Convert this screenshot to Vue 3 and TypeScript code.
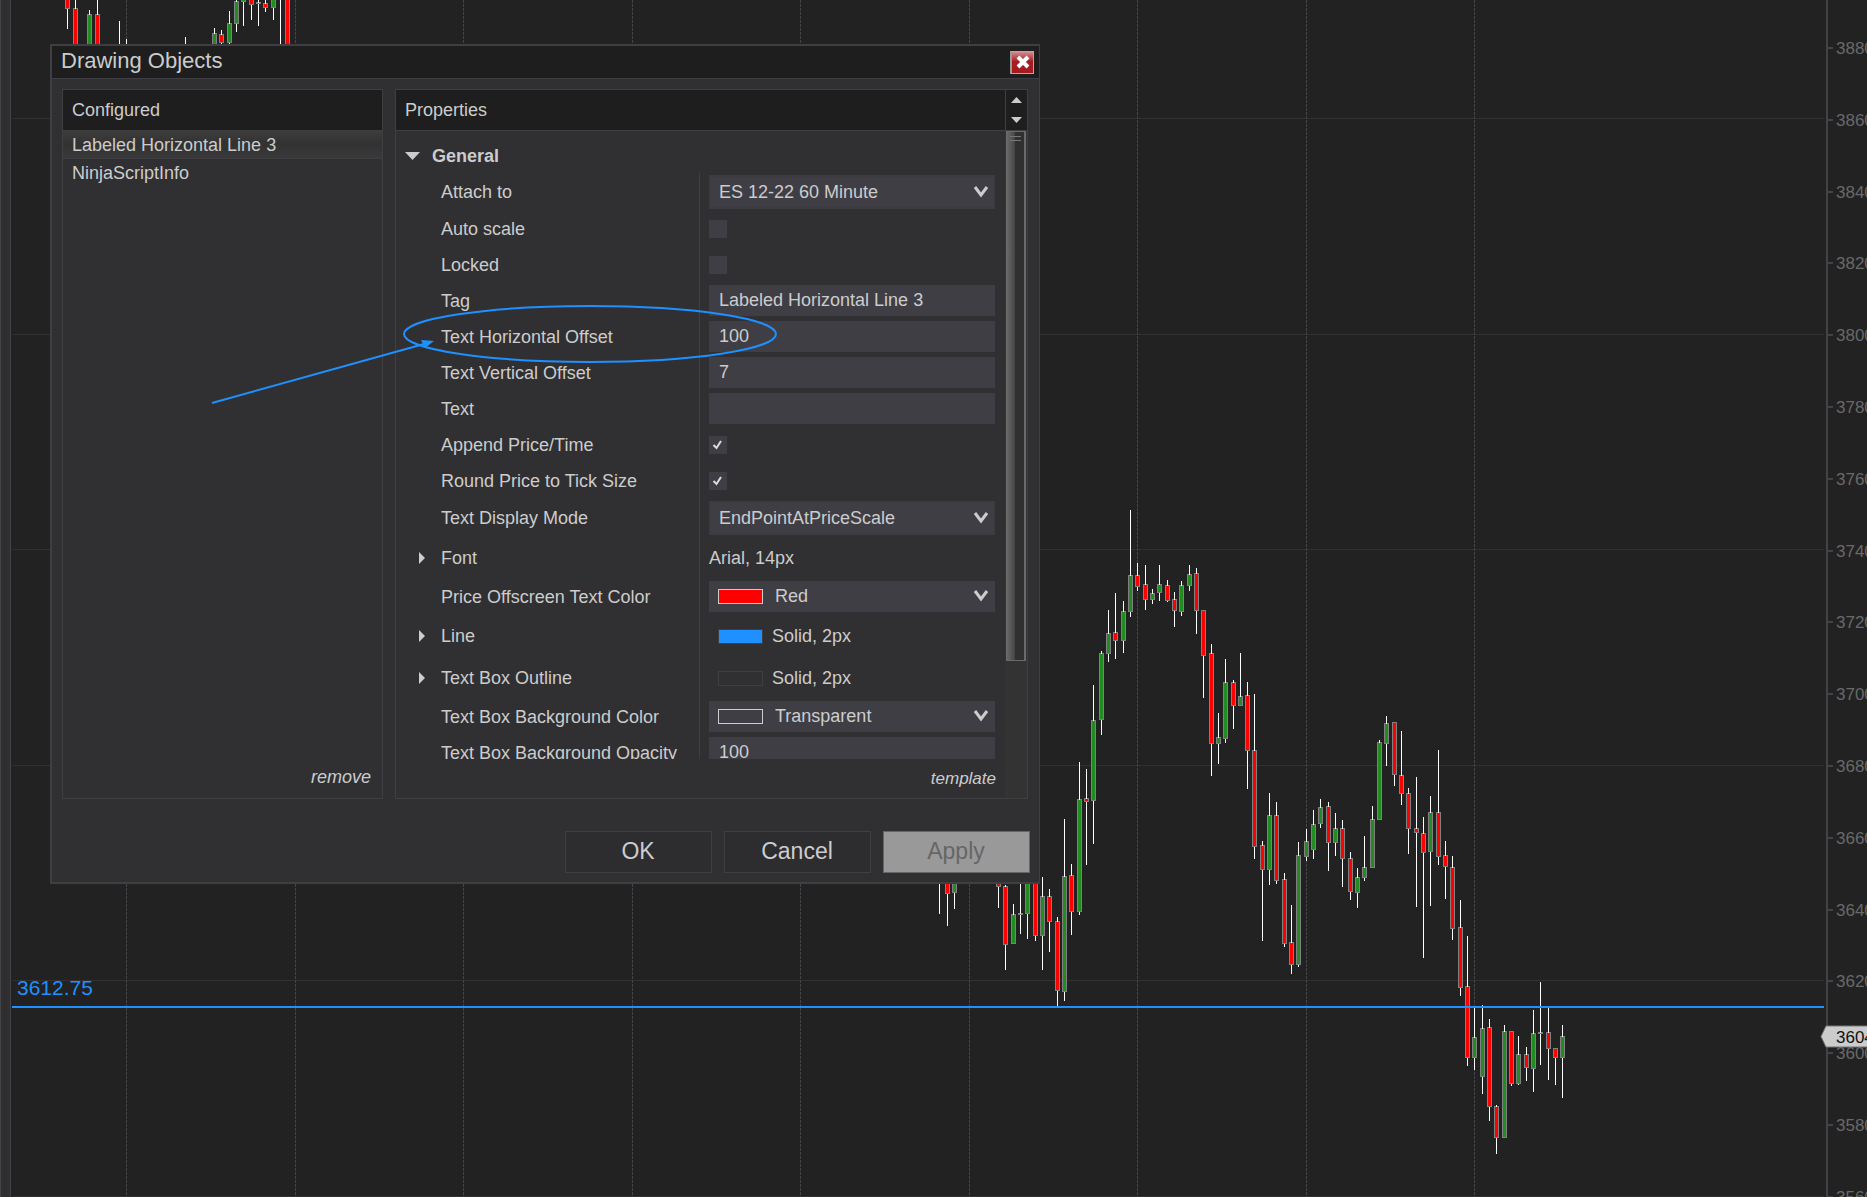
<script setup lang="ts">
import { ref } from 'vue'

type Kind = 'up' | 'down' | 'flat'
// x of the wick, high, body top, body bottom, low
type Bar = [number, number, number, number, number, Kind]

const U: Kind = 'up'
const D: Kind = 'down'
const F: Kind = 'flat'

const bars: Bar[] = [
  [67, -5, -5, 9, 29, D], [75, 0, 8, 60, 60, D], [89, 10, 14, 60, 60, U], [97, 0, 14, 60, 60, D],
  [119, 21, 60, 62, 62, F], [126, 39, 60, 62, 62, F], [185, 37, 60, 62, 62, F],
  [214, 28, 33, 60, 60, U], [221, 30, 34, 43, 50, D], [229, 11, 23, 43, 50, U], [236, 0, 1, 24, 32, U],
  [243, -5, -5, 2, 26, U], [251, -5, -5, 5, 20, D], [258, 0, 2, 4, 26, F], [265, 0, 3, 8, 12, D],
  [273, -5, -5, 8, 20, U], [280, -5, 60, 62, 62, F], [287, -5, -5, 60, 60, D],
  [939, 860, 860, 862, 914, F], [947, 860, 860, 894, 926, D], [954, 860, 860, 893, 909, U],
  [998, 860, 860, 887, 908, D], [1005, 885, 886, 945, 970, D], [1013, 904, 914, 944, 944, U],
  [1020, 870, 913, 915, 934, F], [1027, 860, 860, 914, 939, U], [1035, 860, 860, 936, 941, D],
  [1042, 877, 896, 936, 970, U], [1049, 889, 896, 922, 952, D], [1057, 917, 921, 991, 1006, D],
  [1064, 819, 876, 992, 1001, U], [1071, 864, 875, 912, 935, D], [1079, 762, 799, 912, 915, U],
  [1086, 769, 798, 802, 865, D], [1093, 685, 720, 801, 844, U], [1101, 651, 653, 720, 735, U],
  [1108, 610, 633, 654, 662, U], [1115, 593, 632, 641, 659, D], [1123, 601, 611, 641, 653, U],
  [1130, 510, 575, 612, 617, U], [1137, 563, 575, 587, 591, D], [1145, 565, 584, 600, 610, D],
  [1152, 589, 593, 600, 604, U], [1159, 565, 584, 593, 601, U], [1167, 580, 585, 601, 602, D],
  [1174, 592, 599, 611, 627, D], [1181, 581, 585, 612, 616, U], [1189, 565, 574, 586, 591, U],
  [1196, 568, 573, 611, 634, D], [1203, 610, 610, 656, 698, D], [1211, 644, 653, 744, 776, D],
  [1218, 713, 737, 744, 764, U], [1225, 659, 682, 739, 743, U], [1233, 680, 682, 706, 729, D],
  [1240, 653, 696, 706, 706, U], [1247, 682, 695, 751, 789, D], [1254, 694, 750, 847, 859, D],
  [1262, 841, 845, 870, 941, D], [1269, 793, 815, 870, 885, U], [1276, 802, 815, 881, 884, D],
  [1284, 873, 879, 944, 947, D], [1291, 905, 942, 965, 974, D], [1298, 842, 855, 965, 967, U],
  [1306, 829, 841, 857, 861, U], [1313, 810, 824, 850, 859, U], [1320, 799, 807, 824, 828, U],
  [1328, 802, 806, 843, 871, D], [1335, 813, 828, 843, 856, U], [1342, 820, 828, 859, 887, D],
  [1350, 852, 858, 892, 900, D], [1357, 868, 877, 893, 908, U], [1364, 836, 867, 878, 881, U],
  [1372, 806, 819, 868, 868, U], [1379, 740, 742, 820, 820, U], [1386, 716, 723, 744, 766, U],
  [1394, 722, 722, 775, 786, D], [1401, 731, 775, 794, 805, D], [1408, 788, 793, 829, 854, D],
  [1416, 777, 828, 833, 907, D], [1423, 817, 833, 853, 958, D], [1430, 796, 812, 852, 906, U],
  [1438, 750, 812, 857, 865, D], [1445, 841, 855, 867, 899, D], [1452, 856, 867, 929, 940, D],
  [1460, 900, 927, 988, 996, D], [1467, 936, 986, 1058, 1066, D], [1474, 1007, 1037, 1058, 1070, U],
  [1482, 1005, 1028, 1077, 1094, U], [1489, 1019, 1027, 1107, 1121, D], [1496, 1105, 1106, 1138, 1154, D],
  [1504, 1025, 1031, 1138, 1138, U], [1511, 1031, 1031, 1084, 1086, D], [1518, 1036, 1054, 1084, 1085, U],
  [1526, 1047, 1054, 1068, 1081, D], [1533, 1010, 1033, 1069, 1092, U], [1540, 982, 1032, 1034, 1065, F],
  [1548, 1007, 1032, 1049, 1080, D], [1555, 1048, 1048, 1058, 1085, D], [1562, 1025, 1036, 1058, 1098, U],
]

const timeLines = [126, 295, 463, 632, 800, 969, 1137, 1306, 1474]
const priceLines = [118, 334, 549, 765, 980, 1196]
const ticks = Array.from({ length: 17 }, (_, i) => ({
  price: 3880 - i * 20,
  y: Math.round(48 + i * 71.8),
}))

interface Row {
  id: string
  label: string
  kind: 'select' | 'check' | 'text' | 'value' | 'color'
  value?: string
  checked?: boolean
  swatch?: string
  size?: 'mid' | 'tall'
  expand?: boolean
}

const rows = ref<Row[]>([
  { id: 'attach', label: 'Attach to', kind: 'select', value: 'ES 12-22 60 Minute', size: 'mid' },
  { id: 'autoscale', label: 'Auto scale', kind: 'check', checked: false },
  { id: 'locked', label: 'Locked', kind: 'check', checked: false },
  { id: 'tag', label: 'Tag', kind: 'text', value: 'Labeled Horizontal Line 3' },
  { id: 'hoffset', label: 'Text Horizontal Offset', kind: 'text', value: '100' },
  { id: 'voffset', label: 'Text Vertical Offset', kind: 'text', value: '7' },
  { id: 'text', label: 'Text', kind: 'text', value: '' },
  { id: 'append', label: 'Append Price/Time', kind: 'check', checked: true },
  { id: 'round', label: 'Round Price to Tick Size', kind: 'check', checked: true },
  { id: 'mode', label: 'Text Display Mode', kind: 'select', value: 'EndPointAtPriceScale', size: 'mid' },
  { id: 'font', label: 'Font', kind: 'value', value: 'Arial, 14px', size: 'tall', expand: true },
  { id: 'offscreen', label: 'Price Offscreen Text Color', kind: 'color', value: 'Red', swatch: 'red' },
  { id: 'line', label: 'Line', kind: 'value', value: 'Solid, 2px', swatch: 'blue', size: 'tall', expand: true },
  { id: 'outline', label: 'Text Box Outline', kind: 'value', value: 'Solid, 2px', swatch: 'none', size: 'tall', expand: true },
  { id: 'bgcolor', label: 'Text Box Background Color', kind: 'color', value: 'Transparent', swatch: 'clear' },
  { id: 'opacity', label: 'Text Box Background Opacity', kind: 'text', value: '100' },
])
</script>

<template>
  <main class="workspace">
    <div class="gutter"></div>
    <svg class="plot" aria-label="Price chart">
      <g transform="translate(-11 0)" shape-rendering="crispEdges">
        <rect v-for="y in priceLines" :key="'p' + y" class="price-line" x="13" :y="y" width="100%" height="1" />
        <line v-for="x in timeLines" :key="'t' + x" class="time-line" :x1="x + 0.5" :x2="x + 0.5" y1="0" y2="100%" />
        <g v-for="b in bars" :key="b[0]">
          <rect class="frame" :x="b[0] - 2" :y="b[2]" width="5" :height="b[3] - b[2]" />
          <rect v-if="b[5] !== 'flat'" :class="b[5]" :x="b[0] - 1" :y="b[2] + 1" width="3" :height="b[3] - b[2] - 2" />
          <rect v-if="b[1] < b[2]" class="wick" :x="b[0]" :y="b[1]" width="1" :height="b[2] - b[1] + 1" />
          <rect v-if="b[4] > b[3]" class="wick" :x="b[0]" :y="b[3]" width="1" :height="b[4] - b[3]" />
        </g>
        <rect class="level" x="12" y="1006" width="100%" height="2" />
      </g>
      <text class="level-text" x="6" y="995">3612.75</text>
    </svg>
    <svg class="axis" aria-label="Price scale">
      <rect class="axis-line" x="2" y="0" width="2" height="100%" />
      <g v-for="t in ticks" :key="t.price">
        <rect class="axis-line" x="4" :y="t.y - 1" width="5" height="2" />
        <text class="axis-text" x="12" :y="t.y + 6">{{ t.price }}</text>
      </g>
      <path class="marker" d="M-3 1036.500L2 1026H60V1047H2Z" />
      <text class="marker-text" x="12" y="1043">3604</text>
    </svg>

    <section class="dialog" role="dialog" aria-label="Drawing Objects">
      <header class="titlebar">
        <h1>Drawing Objects</h1>
        <button class="close" type="button" aria-label="Close">
          <svg width="16" height="16" viewBox="0 0 16 16"><path d="M3 3L13 13M13 3L3 13" /></svg>
        </button>
      </header>
      <div class="panels">
        <section class="panel configured">
          <h2>Configured</h2>
          <ul>
            <li class="selected">Labeled Horizontal Line 3</li>
            <li>NinjaScriptInfo</li>
          </ul>
          <a class="action remove" href="#">remove</a>
        </section>
        <section class="panel properties">
          <div class="main">
            <h2>Properties</h2>
            <form class="grid" @submit.prevent>
              <h3>
                <svg width="15" height="8" viewBox="0 0 15 8"><path d="M0 0H15L7.500 8Z" /></svg>
                General
              </h3>
              <div v-for="r in rows" :key="r.id" class="row" :class="r.size">
                <span class="expander">
                  <svg v-if="r.expand" width="6" height="12" viewBox="0 0 6 12"><path d="M0 0L6 6L0 12Z" /></svg>
                </span>
                <label :for="r.id">{{ r.label }}</label>
                <div class="cell">
                  <div v-if="r.kind === 'select' || r.kind === 'color'" class="combo" :class="r.kind">
                    <span v-if="r.swatch" class="swatch" :class="r.swatch"></span>
                    <select :id="r.id" v-model="r.value">
                      <option>{{ r.value }}</option>
                    </select>
                    <svg class="chevron" width="16" height="12" viewBox="0 0 16 12"><path d="M2 1L8 9L14 1" /></svg>
                  </div>
                  <input v-else-if="r.kind === 'text'" :id="r.id" v-model="r.value" class="field" type="text" />
                  <span v-else-if="r.kind === 'check'" class="tick">
                    <input :id="r.id" v-model="r.checked" type="checkbox" />
                    <svg v-if="r.checked" width="18" height="18" viewBox="0 0 18 18"><path d="M4.500 9L7.500 12L12 5" /></svg>
                  </span>
                  <output v-else :id="r.id" class="value">
                    <span v-if="r.swatch" class="swatch" :class="r.swatch"></span>{{ r.value }}
                  </output>
                </div>
              </div>
            </form>
            <a class="action template" href="#">template</a>
          </div>
          <div class="scroll">
            <div class="arrows">
              <svg width="11" height="6" viewBox="0 0 11 6"><path d="M0 6L5.500 0L11 6Z" /></svg>
              <svg width="11" height="6" viewBox="0 0 11 6"><path d="M0 0H11L5.500 6Z" /></svg>
            </div>
            <div class="thumb"><i></i><i></i></div>
          </div>
        </section>
      </div>
      <footer class="buttons">
        <button type="button">OK</button>
        <button type="button">Cancel</button>
        <button type="button" disabled>Apply</button>
      </footer>
    </section>

    <svg class="annotation" aria-hidden="true">
      <ellipse cx="590" cy="334" rx="186" ry="28" />
      <path class="shaft" d="M212 403L424 344" />
      <path class="head" d="M434 341L421 340L425 348Z" />
    </svg>
  </main>
</template>

<style>
body {
  margin: 0;
  background: #222;
}
</style>

<style scoped>
* {
  box-sizing: border-box;
}
.workspace {
  position: relative;
  display: flex;
  height: 100vh;
  overflow: hidden;
  background: #222;
  color: #ccc;
  font-family: "Liberation Sans", Arial, sans-serif;
  font-size: 18px;
}
.gutter {
  flex: none;
  width: 11px;
  background: #2f2f32;
  border: solid #434346;
  border-width: 0 1px;
}
.plot {
  flex: 1;
  min-width: 0;
  height: 100%;
}
.axis {
  flex: none;
  width: 43px;
  height: 100%;
  overflow: visible;
}
.price-line { fill: #313133; }
.time-line {
  stroke: #454547;
  stroke-dasharray: 3 1;
}
.frame { fill: #808080; }
.up { fill: #228b22; }
.down { fill: #f00; }
.wick { fill: #fff; }
.level { fill: #1e90ff; }
.level-text {
  fill: #1e90ff;
  font-size: 21px;
}
.axis-line { fill: #434347; }
.axis-text {
  fill: #696969;
  font-size: 17px;
}
.marker {
  fill: #ccc;
  stroke: #777;
}
.marker-text {
  fill: #111;
  font-size: 17px;
}

.dialog {
  position: absolute;
  left: 50px;
  top: 44px;
  width: 990px;
  background: #303032;
  border: 2px solid #3f3f43;
  border-right-width: 1px;
}
h1, h2, h3, ul {
  margin: 0;
  padding: 0;
  font-weight: normal;
}
.titlebar {
  display: flex;
  align-items: center;
  justify-content: space-between;
  height: 33px;
  padding: 0 5px 0 9px;
  background: #1e1e1e;
  border-bottom: 1px solid #3f3f43;
}
h1 {
  padding-bottom: 3px;
  font-size: 22px;
  line-height: 26px;
}
.close {
  display: grid;
  place-items: center;
  width: 24px;
  height: 23px;
  padding: 0;
  border: 1px solid #b5a5a6;
  border-left: 2px solid #999;
  background: linear-gradient(#d08d90, #a81d21 45%, #a41a1e);
}
.close path {
  fill: none;
  stroke: #fff;
  stroke-width: 4;
}
.panels {
  display: flex;
  gap: 12px;
  padding: 10px 11px 0 10px;
}
.panel {
  border: 1px solid #3f3f43;
}
h2 {
  height: 41px;
  padding-left: 9px;
  background: #1e1e1e;
  border-bottom: 1px solid #3f3f43;
  font-size: 18px;
  line-height: 40px;
}
.configured {
  display: flex;
  flex-direction: column;
  width: 321px;
}
.configured h2 {
  height: 40px;
  border-bottom: 0;
}
ul {
  flex: 1;
  list-style: none;
}
li {
  height: 29px;
  padding-left: 9px;
  line-height: 29px;
}
.selected {
  background: linear-gradient(#3e3e3e, #323232 50%, #39393a);
  border-bottom: 1px solid #3f3f43;
  line-height: 30px;
}
.action {
  color: #ccc;
  font-style: italic;
  text-decoration: none;
  text-align: right;
}
.remove {
  padding: 0 11px 10px 0;
  line-height: 22px;
}
.properties {
  display: flex;
  flex: 1;
}
.main {
  display: flex;
  flex: 1;
  flex-direction: column;
}
.grid {
  height: 628px;
  overflow: hidden;
}
h3 {
  display: flex;
  align-items: center;
  gap: 12px;
  height: 42px;
  padding: 8px 0 0 9px;
  font-size: 18px;
  font-weight: bold;
}
svg path {
  fill: #ccc;
}
.row {
  display: grid;
  grid-template-columns: 45px 258px 1fr;
  align-items: center;
  height: 36px;
}
.mid { height: 38px; }
.tall { height: 42px; }
.expander {
  display: flex;
  padding-left: 23px;
}
.row label {
  white-space: nowrap;
}
.cell {
  display: flex;
  align-items: center;
  height: 100%;
  padding: 0 10px 0 9px;
  border-left: 1px solid #3f3f43;
}
.field,
.combo {
  width: 100%;
  height: 31px;
  margin: 0 0 1px;
  border: 0;
  background: #3f3e45;
}
.field {
  padding: 0 10px;
  color: #ccc;
  font: inherit;
}
.combo {
  display: flex;
  align-items: center;
  padding-right: 6px;
}
.combo.select {
  height: 34px;
  margin: 0;
  border: 2px solid #3b3b40;
  padding-right: 4px;
}
.combo select {
  flex: 1;
  min-width: 0;
  height: 100%;
  margin: 0;
  padding: 0 0 0 8px;
  border: 0;
  appearance: none;
  background: transparent;
  color: #ccc;
  font: inherit;
}
.combo.color {
  padding-left: 9px;
  padding-bottom: 1px;
}
.combo.color select {
  padding-left: 12px;
}
.chevron path {
  fill: none;
  stroke: #ccc;
  stroke-width: 3;
}
.swatch {
  flex: none;
  width: 45px;
  height: 15px;
  border: 1px solid #ccc;
}
.swatch.red { background: #f00; }
.swatch.blue {
  background: #1e90ff;
  border-color: #3f3f43;
}
.swatch.none { border-color: #3f3f43; }
.value {
  display: flex;
  align-items: center;
  gap: 9px;
}
.value .swatch {
  margin-left: 9px;
}
.tick {
  position: relative;
  display: flex;
}
.tick input {
  width: 18px;
  height: 18px;
  margin: 0;
  appearance: none;
  background: #3f3e45;
}
.tick svg {
  position: absolute;
  inset: 0;
  pointer-events: none;
}
.tick path {
  fill: none;
  stroke: #ddd;
  stroke-width: 2;
}
.template {
  height: 39px;
  padding-right: 9px;
  font-size: 17px;
  line-height: 40px;
}
.scroll {
  width: 22px;
  background: #333;
}
.arrows {
  display: flex;
  flex-direction: column;
  align-items: center;
  justify-content: space-between;
  height: 41px;
  padding: 7px 1px 7px 0;
  background: #1e1e1e;
  border-left: 1px solid #3f3f43;
  border-bottom: 1px solid #3f3f43;
}
.thumb {
  display: flex;
  flex-direction: column;
  align-items: center;
  gap: 3px;
  height: 530px;
  margin: 0 1px;
  padding-top: 4px;
  border: solid #6a6a6a;
  border-width: 1px 2px 1px 0;
  background: linear-gradient(90deg, #6c6c6c, #555 30%, #444 50%, #303030 52%);
}
.thumb i {
  width: 11px;
  height: 1px;
  background: #777;
}
.buttons {
  display: flex;
  justify-content: flex-end;
  gap: 12px;
  padding: 32px 9px 9px;
}
.buttons button {
  width: 147px;
  height: 42px;
  padding: 0 1px 2px 0;
  border: 1px solid #3f3f43;
  background: #2d2d2f;
  color: #ccc;
  font-family: inherit;
  font-size: 23px;
}
.buttons button:disabled {
  border-color: #666;
  background: #999;
  color: #666;
}
.annotation {
  position: absolute;
  inset: 0;
  width: 100%;
  height: 100%;
  pointer-events: none;
}
.annotation ellipse,
.annotation .shaft {
  fill: none;
  stroke: #1e90ff;
  stroke-width: 2;
}
.annotation .head {
  fill: #1e90ff;
}
.axis .marker {
  fill: #ccc;
}
</style>
